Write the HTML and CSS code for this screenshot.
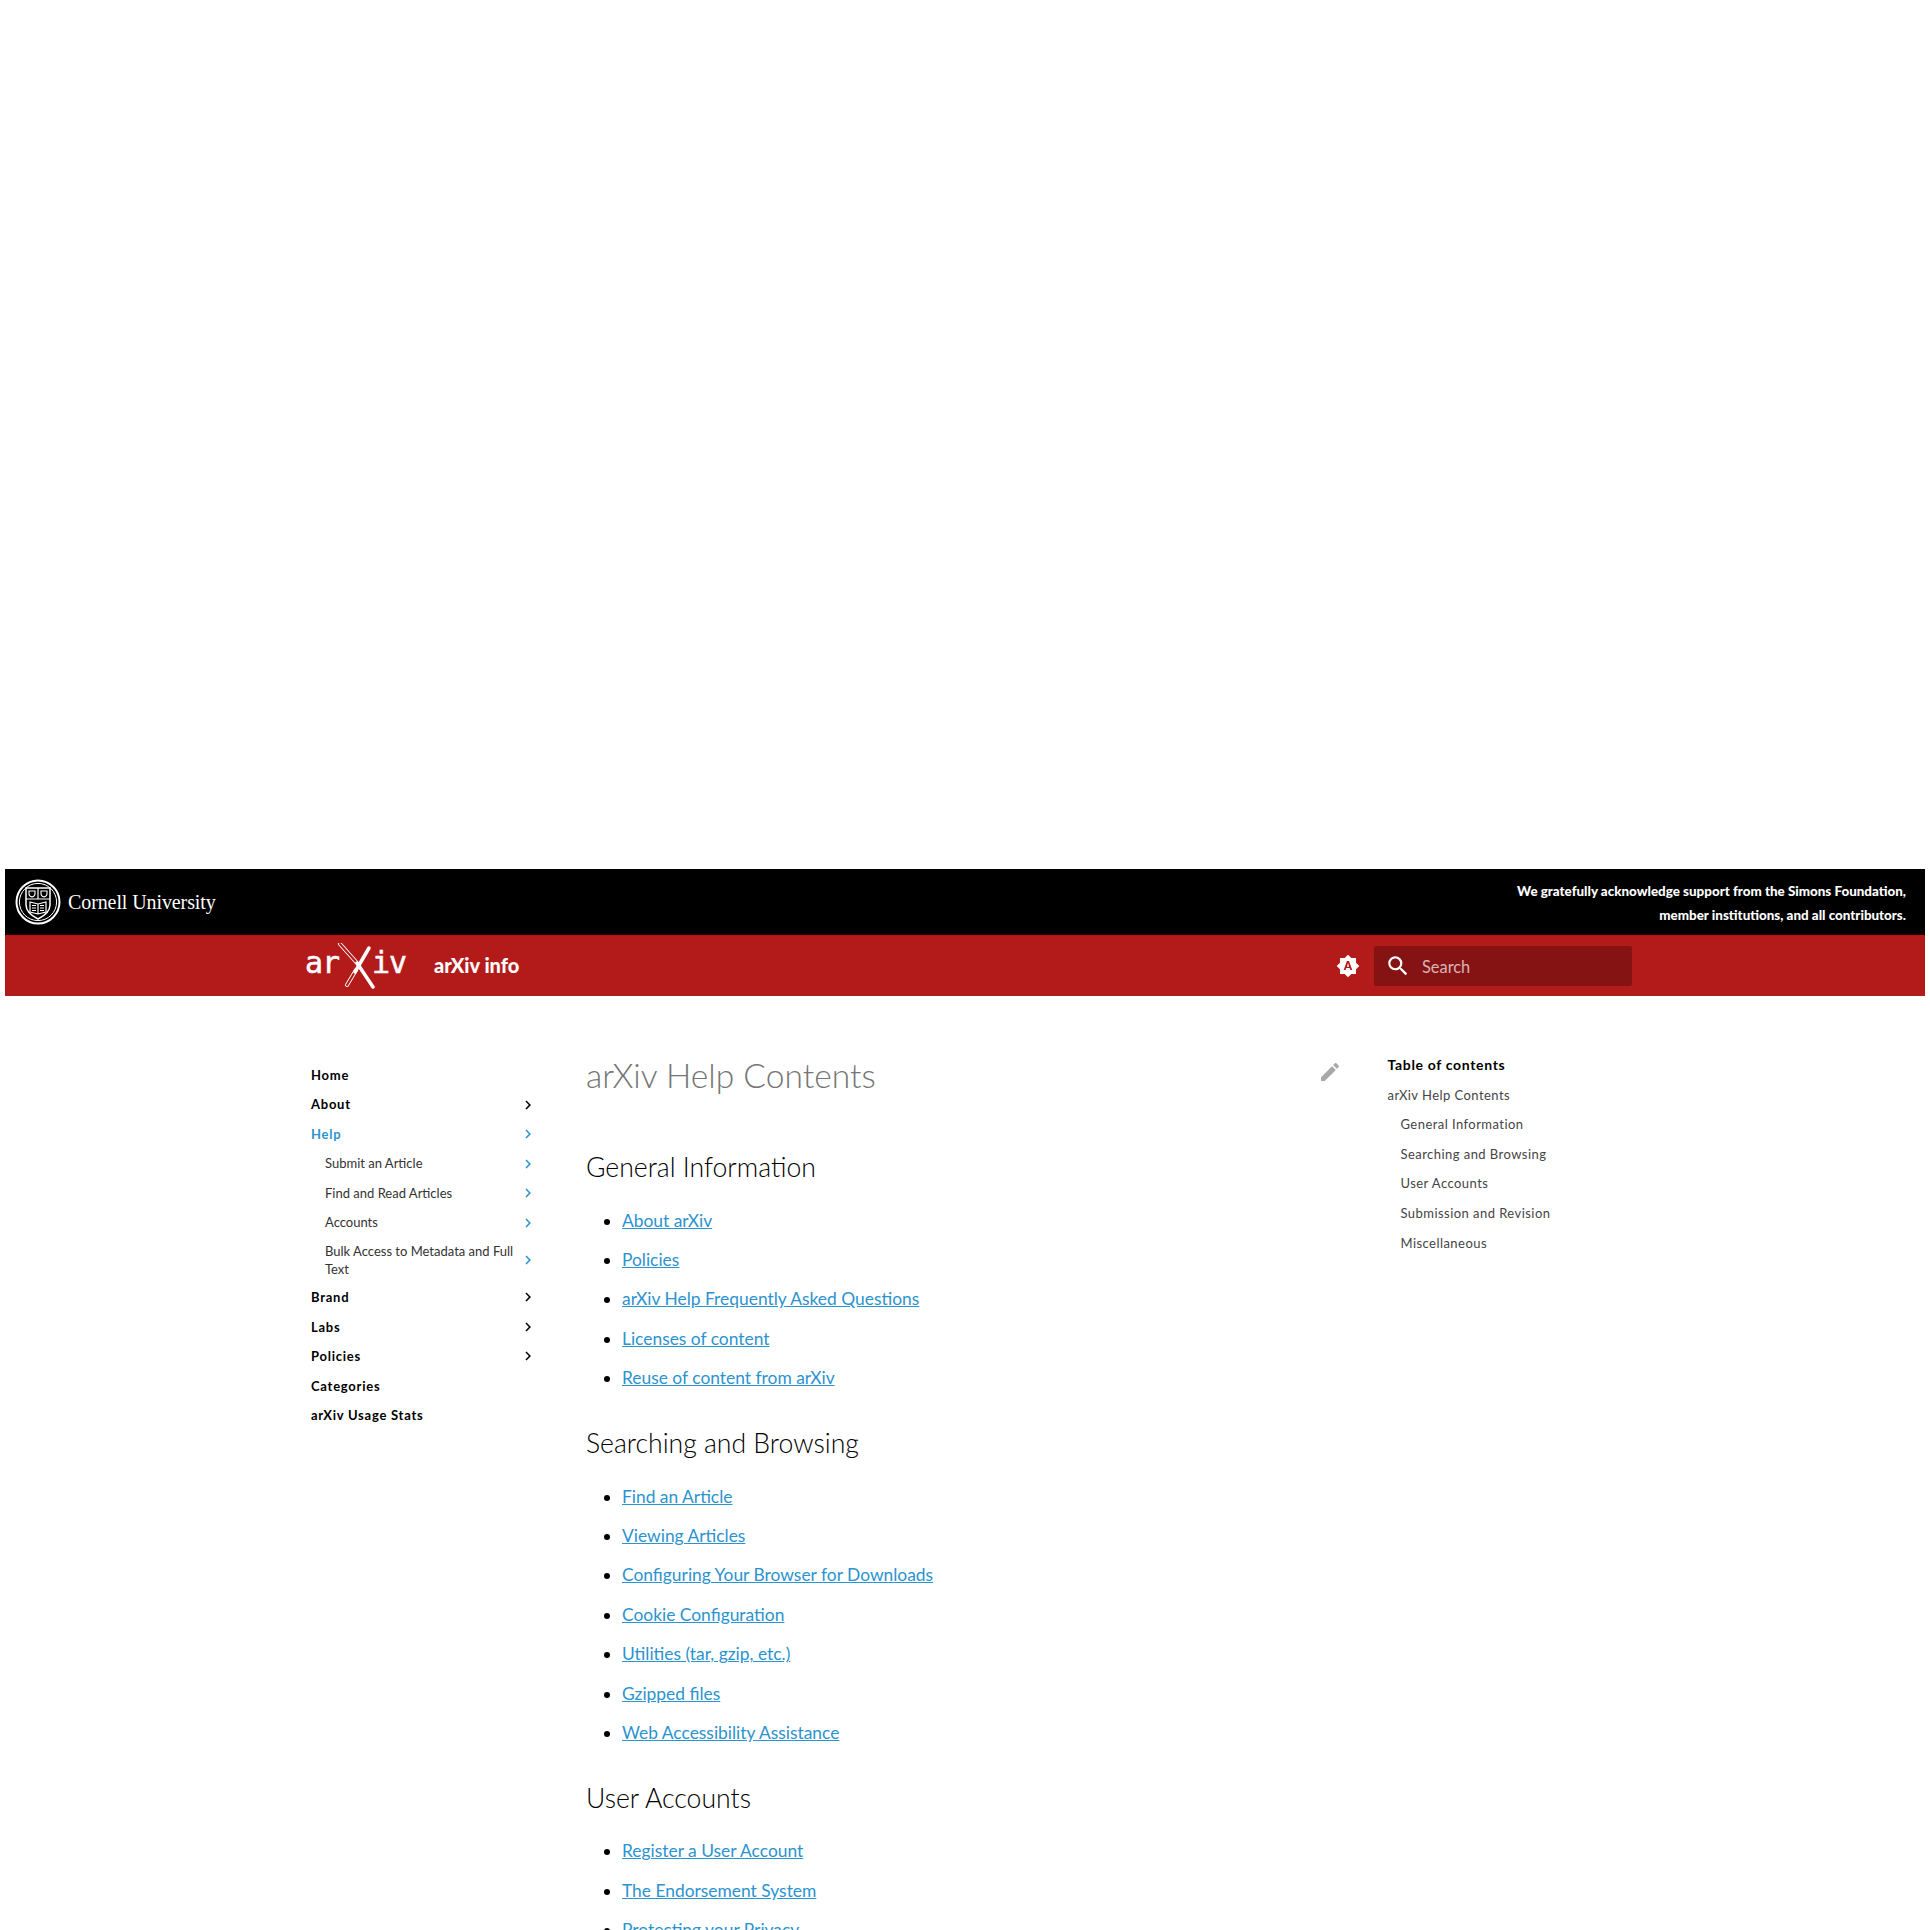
FILE: index.html
```html
<!DOCTYPE html>
<html lang="en">
<head>
    <meta charset="UTF-8">
    <meta name="viewport" content="width=device-width, initial-scale=1.0">
    <title>arXiv Help Contents</title>
    <link rel="stylesheet" href="styles.css">
</head>
<body>
    <div class="blank"></div>

    <div class="cornell-bar">
        <a href="#" class="cornell">
            <svg class="seal" viewBox="0 0 46 46">
                <circle cx="23" cy="23" r="21.5" fill="none" stroke="#fff" stroke-width="2"/>
                <circle cx="23" cy="23" r="18.6" fill="none" stroke="#fff" stroke-width="1"/>
                <path d="M11 9H35V26C35 33 29 37 23 40C17 37 11 33 11 26Z" fill="none" stroke="#fff" stroke-width="1.5"/>
                <path d="M11 20H35M23 9V20" stroke="#fff" stroke-width="1.2"/>
                <path d="M14 12H20V15C20 17 17 18 17 18C17 18 14 17 14 15ZM26 12H32V15C32 17 29 18 29 18C29 18 26 17 26 15Z" fill="none" stroke="#fff" stroke-width="1.1"/>
                <path d="M15 23L23 25L31 23V33L23 35L15 33ZM23 25V35" fill="none" stroke="#fff" stroke-width="1.2"/>
                <path d="M17 26.5H21M17 29H21M17 31.500H21M25 26.500H29M25 29H29M25 31.500H29" stroke="#fff" stroke-width="1"/>
            </svg>
            <span>Cornell University</span>
        </a>
        <div class="thanks">
            <p>We gratefully acknowledge support from the Simons Foundation,</p>
            <p>member institutions, and all contributors.</p>
        </div>
    </div>

    <header class="red-bar">
        <a href="#" class="logo">
            <svg viewBox="0 0 102 46" width="102" height="46">
                <text class="logo-text" x="0" y="30">ar</text>
                <text class="logo-text" x="67" y="30">iv</text>
                <path d="M35 1L52 20" stroke="#fff" stroke-width="4" stroke-linecap="round"/>
                <path d="M35 1L52 20" stroke="#b31b1b" stroke-width="2.200" stroke-linecap="round"/>
                <path d="M42 42L51 27" stroke="#fff" stroke-width="4" stroke-linecap="round"/>
                <path d="M42 42L51 27" stroke="#b31b1b" stroke-width="2.200" stroke-linecap="round"/>
                <path d="M52 20L68 44" stroke="#fff" stroke-width="3.500" stroke-linecap="round"/>
                <path d="M50 29L64 5" stroke="#fff" stroke-width="3.500" stroke-linecap="round"/>
            </svg>
        </a>
        <span class="site-name">arXiv info</span>
        <svg class="palette" viewBox="0 0 24 24"><path d="M14.3 16L13.6 14H10.3L9.6 16H7.7L10.9 7H13L16.2 16H14.3M20 8.69V4H15.31L12 .69 8.69 4H4V8.69L.69 12 4 15.31V20H8.69L12 23.31 15.31 20H20V15.31L23.31 12 20 8.69M10.85 12.65H13.15L12 9L10.85 12.65Z"/></svg>
        <div class="search">
            <svg viewBox="0 0 24 24"><path d="M9.5,3A6.5,6.5 0 0,1 16,9.5C16,11.11 15.41,12.59 14.44,13.73L14.71,14H15.5L20.5,19L19,20.5L14,15.5V14.71L13.73,14.44C12.59,15.41 11.11,16 9.5,16A6.5,6.5 0 0,1 3,9.5A6.5,6.5 0 0,1 9.5,3M9.5,5C7,5 5,7 5,9.5C5,12 7,14 9.5,14C12,14 14,12 14,9.5C14,7 12,5 9.5,5Z"/></svg>
            <span>Search</span>
        </div>
    </header>

    <div class="page">
        <nav class="sidebar">
            <a href="#" class="nav-row top">Home</a>
            <a href="#" class="nav-row top">About <svg viewBox="0 0 24 24"><path d="M8.59,16.58L13.17,12L8.59,7.41L10,6L16,12L10,18L8.59,16.58Z"/></svg></a>
            <a href="#" class="nav-row top active">Help <svg viewBox="0 0 24 24"><path d="M8.59,16.58L13.17,12L8.59,7.41L10,6L16,12L10,18L8.59,16.58Z"/></svg></a>
            <a href="#" class="nav-row sub">Submit an Article <svg viewBox="0 0 24 24"><path d="M8.59,16.58L13.17,12L8.59,7.41L10,6L16,12L10,18L8.59,16.58Z"/></svg></a>
            <a href="#" class="nav-row sub">Find and Read Articles <svg viewBox="0 0 24 24"><path d="M8.59,16.58L13.17,12L8.59,7.41L10,6L16,12L10,18L8.59,16.58Z"/></svg></a>
            <a href="#" class="nav-row sub">Accounts <svg viewBox="0 0 24 24"><path d="M8.59,16.58L13.17,12L8.59,7.41L10,6L16,12L10,18L8.59,16.58Z"/></svg></a>
            <a href="#" class="nav-row sub wrap"><span>Bulk Access to Metadata and Full Text</span> <svg viewBox="0 0 24 24"><path d="M8.59,16.58L13.17,12L8.59,7.41L10,6L16,12L10,18L8.59,16.58Z"/></svg></a>
            <a href="#" class="nav-row top">Brand <svg viewBox="0 0 24 24"><path d="M8.59,16.58L13.17,12L8.59,7.41L10,6L16,12L10,18L8.59,16.58Z"/></svg></a>
            <a href="#" class="nav-row top">Labs <svg viewBox="0 0 24 24"><path d="M8.59,16.58L13.17,12L8.59,7.41L10,6L16,12L10,18L8.59,16.58Z"/></svg></a>
            <a href="#" class="nav-row top">Policies <svg viewBox="0 0 24 24"><path d="M8.59,16.58L13.17,12L8.59,7.41L10,6L16,12L10,18L8.59,16.58Z"/></svg></a>
            <a href="#" class="nav-row top">Categories</a>
            <a href="#" class="nav-row top">arXiv Usage Stats</a>
        </nav>

        <main class="content">
            <div class="title-row">
                <h1>arXiv Help Contents</h1>
                <svg class="pencil" viewBox="0 0 24 24"><path d="M20.71,7.04C21.1,6.65 21.1,6 20.71,5.63L18.37,3.29C18,2.9 17.35,2.9 16.96,3.29L15.12,5.12L18.87,8.87M3,17.25V21H6.75L17.81,9.93L14.06,6.18L3,17.25Z"/></svg>
            </div>

            <h2>General Information</h2>
            <ul>
                <li><a href="#">About arXiv</a></li>
                <li><a href="#">Policies</a></li>
                <li><a href="#">arXiv Help Frequently Asked Questions</a></li>
                <li><a href="#">Licenses of content</a></li>
                <li><a href="#">Reuse of content from arXiv</a></li>
            </ul>

            <h2>Searching and Browsing</h2>
            <ul>
                <li><a href="#">Find an Article</a></li>
                <li><a href="#">Viewing Articles</a></li>
                <li><a href="#">Configuring Your Browser for Downloads</a></li>
                <li><a href="#">Cookie Configuration</a></li>
                <li><a href="#">Utilities (tar, gzip, etc.)</a></li>
                <li><a href="#">Gzipped files</a></li>
                <li><a href="#">Web Accessibility Assistance</a></li>
            </ul>

            <h2>User Accounts</h2>
            <ul>
                <li><a href="#">Register a User Account</a></li>
                <li><a href="#">The Endorsement System</a></li>
                <li><a href="#">Protecting your Privacy</a></li>
            </ul>
        </main>

        <aside class="toc">
            <div class="toc-title">Table of contents</div>
            <a href="#">arXiv Help Contents</a>
            <a href="#" class="nested">General Information</a>
            <a href="#" class="nested">Searching and Browsing</a>
            <a href="#" class="nested">User Accounts</a>
            <a href="#" class="nested">Submission and Revision</a>
            <a href="#" class="nested">Miscellaneous</a>
        </aside>
    </div>
</body>
</html>
```

FILE: styles.css
```css
html, body {
    height: 1930px;
    overflow: hidden;
}

body {
    margin: 0;
    background-color: #fff;
    color: #000;
    font-family: 'Lato', 'Open Sans', sans-serif;
}

a {
    text-decoration: none;
    color: inherit;
}

.blank {
    height: 869px;
}

/* Cornell strip */
.cornell-bar {
    display: flex;
    justify-content: space-between;
    align-items: center;
    height: 66px;
    margin: 0 5px;
    padding: 0 19px 0 10px;
    background-color: #000;
    border-bottom: 1px solid #d00;
    color: #fff;
}

.cornell {
    display: flex;
    align-items: center;
    gap: 7px;
    font-family: 'Liberation Serif', serif;
    font-size: 20px;
    letter-spacing: -0.1px;
}

.seal {
    width: 46px;
    height: 46px;
}

.thanks {
    padding-top: 2px;
    text-align: right;
    font-size: 13.4px;
    font-weight: 900;
    line-height: 24px;
}

.thanks p {
    margin: 0;
}

/* Red header */
.red-bar {
    display: flex;
    align-items: center;
    height: 60px;
    margin: 0 5px;
    padding: 0 293px 0 300px;
    background-color: #b31b1b;
    color: #fff;
}

.logo {
    display: flex;
}

.logo-text {
    font-family: 'DejaVu Sans Mono', monospace;
    font-size: 30px;
    letter-spacing: -1px;
    fill: #fff;
    stroke: #fff;
    stroke-width: 0.5px;
}

.site-name {
    margin: 0 0 3px 27px;
    font-size: 20px;
    font-weight: 900;
}

.palette {
    width: 24px;
    height: 24px;
    margin-left: auto;
    fill: #fff;
}

.search {
    display: flex;
    align-items: center;
    gap: 11px;
    width: 258px;
    height: 40px;
    margin-left: 14px;
    padding-left: 11px;
    box-sizing: border-box;
    background-color: #851313;
    border-radius: 2px;
    color: #d9b5b5;
    font-size: 16.4px;
}

.search svg {
    width: 26px;
    height: 26px;
    fill: #fff;
}

/* Three columns */
.page {
    display: flex;
    align-items: flex-start;
    padding: 50px 0 0 311px;
}

.sidebar {
    display: flex;
    flex-direction: column;
    width: 226px;
    margin-top: 14.5px;
    margin-right: 49px;
}

.nav-row {
    display: flex;
    justify-content: space-between;
    align-items: center;
    min-height: 29.5px;
    font-size: 13px;
    line-height: 18.6px;
}

.nav-row svg {
    flex: none;
    width: 18px;
    height: 18px;
    fill: currentColor;
}

.top {
    font-weight: 700;
    letter-spacing: 0.75px;
}

.sub {
    padding-left: 14px;
    font-size: 13px;
    color: #333;
}

.sub svg,
.active {
    color: #2b93cf;
}

.wrap {
    padding: 4px 0 4px 14px;
}

.wrap span {
    width: 190px;
}

.content {
    width: 756px;
    margin-right: 45.5px;
}

.title-row {
    display: flex;
    justify-content: space-between;
    align-items: flex-start;
    padding-top: 5px;
}

h1 {
    margin: 0 0 49px;
    color: #757575;
    font-size: 33.6px;
    font-weight: 300;
    line-height: 48px;
}

.pencil {
    width: 24px;
    height: 24px;
    margin: 9px 0 0;
    fill: #a8a8a8;
}

h2 {
    margin: 0 0 14.5px;
    font-size: 26.6px;
    font-weight: 300;
    line-height: 38px;
}

ul {
    margin: 0 0 26.5px;
    padding: 0 0 0 36px;
}

li {
    font-size: 17.4px;
    line-height: 39.4px;
}

li a {
    color: #2b93cf;
    text-decoration: underline;
}

.toc {
    display: flex;
    flex-direction: column;
    margin-top: 4px;
    font-size: 13px;
    line-height: 29.6px;
    letter-spacing: 0.45px;
    color: #444;
}

.toc-title {
    margin-bottom: 1px;
    font-size: 14px;
    font-weight: 700;
    letter-spacing: 0.67px;
    color: #000;
}

.nested {
    padding-left: 13px;
}
```
